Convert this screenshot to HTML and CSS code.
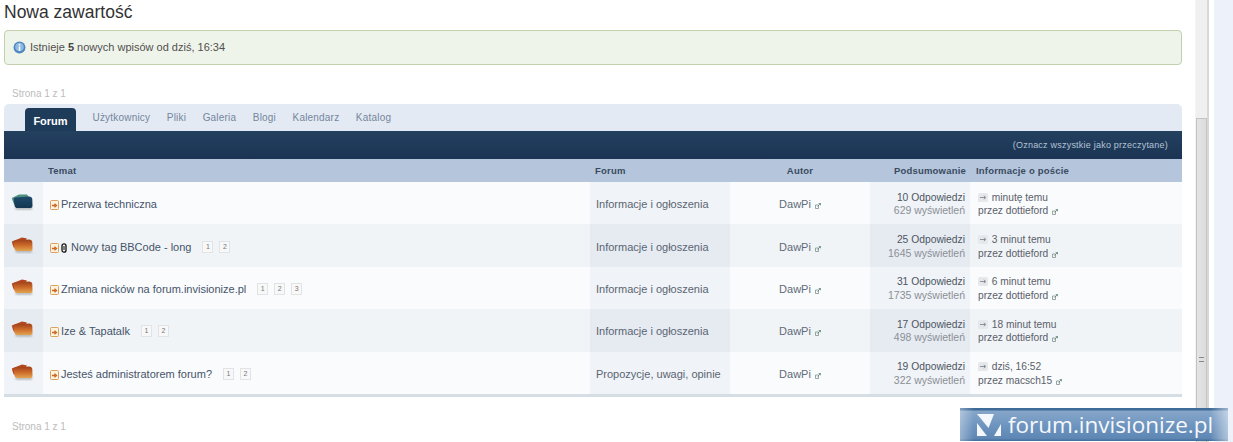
FILE: index.html
```html
<!DOCTYPE html>
<html lang="pl">
<head>
<meta charset="utf-8">
<title>Nowa zawartość</title>
<link rel="stylesheet" href="styles.css">
</head>
<body>
<svg class="defs" width="0" height="0" aria-hidden="true">
  <defs>
    <linearGradient id="orange" x1="0" y1="0" x2="0" y2="1"><stop offset="0" stop-color="#9c3f1c"/><stop offset=".5" stop-color="#cc6a2a"/><stop offset="1" stop-color="#e2a44f"/></linearGradient>
    <linearGradient id="navy" x1="0" y1="0" x2="0" y2="1"><stop offset="0" stop-color="#1f4a6b"/><stop offset="1" stop-color="#123752"/></linearGradient>
    <filter id="soft" x="-10%" y="-10%" width="120%" height="120%"><feGaussianBlur stdDeviation=".35"/></filter>
    <filter id="softer" x="-20%" y="-50%" width="140%" height="200%"><feGaussianBlur stdDeviation=".9"/></filter>
    <symbol id="folder-new" viewBox="0 0 23 18">
      <path d="M4 14H21V16.500H5Z" fill="#a9adaf" filter="url(#softer)"/>
      <g filter="url(#soft)">
        <path d="M.8 5.500L11 1.500L16 2.500L12 8L3 12Q1.500 9 .8 5.500Z" fill="#b4451d"/>
        <path d="M2.500 6.500Q2 4.700 4 4.500L18 3.500Q21 3.500 21.300 6L21.500 13Q21.500 15 19.500 15L5.500 15Q3.800 15 3.300 12Z" fill="url(#orange)"/>
      </g>
    </symbol>
    <symbol id="folder-read" viewBox="0 0 23 18">
      <path d="M4 14H21V16.500H5Z" fill="#a9adaf" filter="url(#softer)"/>
      <g filter="url(#soft)">
        <path d="M.8 5L8 1.500L16 1.500L18 4L5 12L3 11Q1.500 8 .8 5Z" fill="#4d8f80"/>
        <path d="M2.800 6.500Q2.500 4.700 4.500 4.500L18 3.500Q21 3.500 21.300 6L21.500 13Q21.500 15 19.500 15L5.500 15Q3.800 15 3.400 12Z" fill="url(#navy)"/>
      </g>
    </symbol>
    <symbol id="doc" viewBox="0 0 9 10">
      <rect x=".5" y=".5" width="8" height="9" rx="1" fill="#fdf3df" stroke="#d9a05f"/>
      <path d="M2 5.500H5.500M4.500 3.800L6.500 5.500L4.500 7.200" fill="none" stroke="#c9661f" stroke-width="1.300"/>
    </symbol>
    <symbol id="ext" viewBox="0 0 6 6">
      <path d="M.5 2H3.500V5.500H.5Z" fill="none" stroke="#7f9089" stroke-width=".8"/>
      <path d="M2.500 3.500L5.500 .5M3.700 .5H5.500V2.300" fill="none" stroke="#5f8773" stroke-width=".8"/>
    </symbol>
    <symbol id="goto" viewBox="0 0 10 9">
      <rect width="10" height="9" rx="1.500" fill="#e6e8eb"/>
      <path d="M2 4.500H7.500M5.800 2.800L7.800 4.500L5.800 6.200" fill="none" stroke="#8a929b" stroke-width="1"/>
    </symbol>
  </defs>
</svg>
<div class="page">
  <main class="content">
    <h1 class="title">Nowa zawartość</h1>
    <div class="message">
      <svg class="info" viewBox="0 0 12 12" aria-hidden="true"><circle cx="6" cy="6" r="5.500" fill="#4f86bd"/><circle cx="6" cy="5.500" r="4" fill="#8dbbe4"/><rect x="5.300" y="5" width="1.400" height="4" fill="#fff"/><rect x="5.300" y="2.800" width="1.400" height="1.400" fill="#fff"/></svg>
      <span>Istnieje <b>5</b> nowych wpisów od dziś, 16:34</span>
    </div>
    <div class="pager pager-top">Strona 1 z 1</div>
    <section class="board">
      <nav class="tabs">
        <a class="tab tab-active">Forum</a>
        <a class="tab">Użytkownicy</a>
        <a class="tab">Pliki</a>
        <a class="tab">Galeria</a>
        <a class="tab">Blogi</a>
        <a class="tab">Kalendarz</a>
        <a class="tab">Katalog</a>
      </nav>
      <div class="mainbar">(Oznacz wszystkie jako przeczytane)</div>
      <table class="topics">
        <colgroup><col class="c-icon"><col class="c-topic"><col class="c-forum"><col class="c-author"><col class="c-stats"><col class="c-last"></colgroup>
        <thead>
          <tr>
            <th></th>
            <th class="th-topic">Temat</th>
            <th class="th-forum">Forum</th>
            <th class="th-author">Autor</th>
            <th class="th-stats">Podsumowanie</th>
            <th class="th-last">Informacje o poście</th>
          </tr>
        </thead>
        <tbody>
          <tr class="row">
            <td class="t-icon"><svg class="folder"><use href="#folder-read"/></svg></td>
            <td class="t-topic"><svg class="doc"><use href="#doc"/></svg><a class="topic-link">Przerwa techniczna</a></td>
            <td class="t-forum">Informacje i ogłoszenia</td>
            <td class="t-author">DawPi <svg class="ext"><use href="#ext"/></svg></td>
            <td class="t-stats"><div class="replies">10 Odpowiedzi</div><div class="views">629 wyświetleń</div></td>
            <td class="t-last"><div><svg class="goto"><use href="#goto"/></svg> minutę temu</div><div>przez dottieford <svg class="ext"><use href="#ext"/></svg></div></td>
          </tr>
          <tr class="row row-alt">
            <td class="t-icon"><svg class="folder"><use href="#folder-new"/></svg></td>
            <td class="t-topic"><svg class="doc"><use href="#doc"/></svg><svg class="clip" viewBox="0 0 6 10" aria-hidden="true"><rect x="1" y=".8" width="4" height="8.400" rx="2" fill="none" stroke="#111" stroke-width="1.300"/><path d="M3 3V7" stroke="#111" stroke-width="1"/></svg><a class="topic-link">Nowy tag BBCode - long</a><span class="mini"><i>1</i><i>2</i></span></td>
            <td class="t-forum">Informacje i ogłoszenia</td>
            <td class="t-author">DawPi <svg class="ext"><use href="#ext"/></svg></td>
            <td class="t-stats"><div class="replies">25 Odpowiedzi</div><div class="views">1645 wyświetleń</div></td>
            <td class="t-last"><div><svg class="goto"><use href="#goto"/></svg> 3 minut temu</div><div>przez dottieford <svg class="ext"><use href="#ext"/></svg></div></td>
          </tr>
          <tr class="row">
            <td class="t-icon"><svg class="folder"><use href="#folder-new"/></svg></td>
            <td class="t-topic"><svg class="doc"><use href="#doc"/></svg><a class="topic-link">Zmiana nicków na forum.invisionize.pl</a><span class="mini"><i>1</i><i>2</i><i>3</i></span></td>
            <td class="t-forum">Informacje i ogłoszenia</td>
            <td class="t-author">DawPi <svg class="ext"><use href="#ext"/></svg></td>
            <td class="t-stats"><div class="replies">31 Odpowiedzi</div><div class="views">1735 wyświetleń</div></td>
            <td class="t-last"><div><svg class="goto"><use href="#goto"/></svg> 6 minut temu</div><div>przez dottieford <svg class="ext"><use href="#ext"/></svg></div></td>
          </tr>
          <tr class="row row-alt">
            <td class="t-icon"><svg class="folder"><use href="#folder-new"/></svg></td>
            <td class="t-topic"><svg class="doc"><use href="#doc"/></svg><a class="topic-link">Ize &amp; Tapatalk</a><span class="mini"><i>1</i><i>2</i></span></td>
            <td class="t-forum">Informacje i ogłoszenia</td>
            <td class="t-author">DawPi <svg class="ext"><use href="#ext"/></svg></td>
            <td class="t-stats"><div class="replies">17 Odpowiedzi</div><div class="views">498 wyświetleń</div></td>
            <td class="t-last"><div><svg class="goto"><use href="#goto"/></svg> 18 minut temu</div><div>przez dottieford <svg class="ext"><use href="#ext"/></svg></div></td>
          </tr>
          <tr class="row">
            <td class="t-icon"><svg class="folder"><use href="#folder-new"/></svg></td>
            <td class="t-topic"><svg class="doc"><use href="#doc"/></svg><a class="topic-link">Jesteś administratorem forum?</a><span class="mini"><i>1</i><i>2</i></span></td>
            <td class="t-forum">Propozycje, uwagi, opinie</td>
            <td class="t-author">DawPi <svg class="ext"><use href="#ext"/></svg></td>
            <td class="t-stats"><div class="replies">19 Odpowiedzi</div><div class="views">322 wyświetleń</div></td>
            <td class="t-last"><div><svg class="goto"><use href="#goto"/></svg> dziś, 16:52</div><div>przez macsch15 <svg class="ext"><use href="#ext"/></svg></div></td>
          </tr>
        </tbody>
      </table>
    </section>
    <div class="pager pager-bottom">Strona 1 z 1</div>
  </main>
  <div class="scrollbar">
    <div class="thumb"><span class="grip"></span></div>
  </div>
  <div class="sidepane"></div>
</div>
<div class="watermark">
  <svg class="wm-logo" viewBox="0 0 24 22" aria-hidden="true"><path d="M0 0H17L11.500 14Z" fill="#f4f7fb"/><path d="M0 9L10 22H0Z" fill="#f4f7fb"/><path d="M24 10V22H17Z" fill="#f4f7fb"/></svg>
  <span class="wm-text">forum.invisionize.pl</span>
</div>
</body>
</html>
```
FILE: styles.css
```css
* { box-sizing: border-box; }
html, body { margin: 0; padding: 0; height: 442px; overflow: hidden; background: #fff; }
body { font-family: "Liberation Sans", Arial, sans-serif; font-size: 11px; color: #4a5564; position: relative; }
.defs { position: absolute; }
.page { display: flex; height: 442px; }
.content { width: 1195px; flex: none; padding: 0 13px 0 4px; }
.title { margin: 0; padding-top: 1px; height: 30px; font-size: 17.500px; line-height: 22px; font-weight: 400; color: #323232; }
.message { height: 35px; display: flex; align-items: center; gap: 4px; padding: 0 0 1px 8px; background: #eff4ea; border: 1px solid #c3d0ae; border-radius: 4px; font-size: 11px; color: #505050; }
.message b { color: #444; }
.info { width: 13px; height: 13px; }
.pager { font-size: 10px; color: #bcbcbc; padding-left: 8px; line-height: 12px; }
.pager-top { margin-top: 23px; height: 16px; }
.pager-bottom { margin-top: 24px; }
.board { width: 1178px; }
.tabs { height: 27px; background: #e3eaf4; border-radius: 5px 5px 0 0; padding-left: 21px; display: flex; align-items: flex-end; gap: 16.500px; }
.tab { font-size: 10px; letter-spacing: .2px; color: #75869b; height: 27px; line-height: 27px; }
.tab-active { width: 51px; height: 23px; line-height: 26px; text-align: center; background: #1f3b5a; color: #fff; font-size: 11px; letter-spacing: 0; font-weight: 700; border-radius: 4px 4px 0 0; }
.mainbar { height: 28px; background: linear-gradient(#24405f, #1b3454); color: #b4c3d6; font-size: 9px; text-align: right; padding-right: 14px; line-height: 28px; letter-spacing: .22px; }
.topics { width: 1178px; table-layout: fixed; border-collapse: separate; border-spacing: 0; border-bottom: 3px solid #d5dde5; }
.c-icon { width: 39px; }
.c-topic { width: 547px; }
.c-forum { width: 140px; }
.c-author { width: 140px; }
.c-stats { width: 100px; }
.c-last { width: 212px; }
.topics th { height: 23px; padding: 0; background: #b5c6dc; color: #3a4a5f; font-size: 9.500px; font-weight: 700; text-align: left; letter-spacing: .2px; }
.topics .th-topic { padding-left: 5px; }
.topics .th-forum { padding-left: 5px; }
.topics .th-author { text-align: center; }
.topics .th-stats { text-align: right; padding-right: 4px; }
.topics .th-last { padding-left: 6px; }
.row td { height: 42.400px; padding: 2px 0 0; background: #fafbfc; vertical-align: middle; }
.row-alt td { background: #f1f4f7; }
.row .t-icon, .row .t-forum, .row .t-stats { background: #f0f3f7; }
.row-alt .t-icon, .row-alt .t-forum, .row-alt .t-stats { background: #e6ebf2; }
.row .t-icon { padding: 0 0 2px 7px; text-align: left; }
.folder { width: 23px; height: 18px; display: block; }
.row .t-topic { padding-left: 7px; font-size: 11px; line-height: 14px; white-space: nowrap; }
.doc { width: 9px; height: 10px; vertical-align: -2px; margin-right: 2px; }
.clip { width: 6px; height: 10px; vertical-align: -2px; margin-right: 4px; }
.topic-link { color: #45546a; }
.mini { margin-left: 11px; }
.mini i { display: inline-block; width: 11px; height: 12px; margin: 1px 6px 0 0; border: 1px solid #e1e4e6; background: #f8f8f8; color: #777; font-size: 7px; line-height: 10px; text-align: center; font-style: normal; vertical-align: top; }
.row .t-forum { padding-left: 6px; font-size: 11px; color: #5a6572; white-space: nowrap; }
.t-author { text-align: center; font-size: 11px; color: #5f6b7a; }
.ext { width: 6px; height: 6px; margin-left: 1px; vertical-align: -1px; }
.row .t-stats { text-align: right; padding-right: 5px; font-size: 10.300px; line-height: 13.500px; }
.replies { color: #4d5661; }
.views { color: #8a8f96; font-size: 10.500px; }
.row .t-last { padding-left: 8px; font-size: 10.200px; line-height: 13.500px; color: #59606a; white-space: nowrap; }
.goto { width: 10px; height: 9px; vertical-align: -1px; margin-right: 1px; }
.scrollbar { width: 14px; flex: none; background: #f0f0f0; border-right: 2px solid #d8d8d8; border-left: 1px solid #f4f4f4; padding-top: 118px; height: 442px; }
.thumb { height: 324px; background: linear-gradient(90deg, #e4e4e4, #dcdcdc); border: 1px solid #c4c4c4; border-bottom: 0; display: flex; justify-content: center; padding-top: 238px; }
.grip { width: 5px; height: 5px; border-top: 1px solid #888; border-bottom: 1px solid #888; }
.sidepane { flex: 1; margin-left: 5px; background: #edf1fa; }
.watermark { position: absolute; left: 960px; top: 408px; width: 268px; height: 33px; display: flex; align-items: center; padding-left: 17px; gap: 7px; background: linear-gradient(90deg, rgba(255,255,255,.35), transparent 14px, transparent 250px, rgba(255,255,255,.5)), linear-gradient(#3f6b99 0, #3f6b99 2px, #86a6c9 3px, #6d94bf 55%, #5f87b4 92%, #3f6b99 100%); color: #fff; }
.wm-logo { width: 24px; height: 22px; }
.wm-text { font-family: "Open Sans", sans-serif; font-size: 22.500px; line-height: 30px; white-space: nowrap; color: #f6f8fb; }
```
